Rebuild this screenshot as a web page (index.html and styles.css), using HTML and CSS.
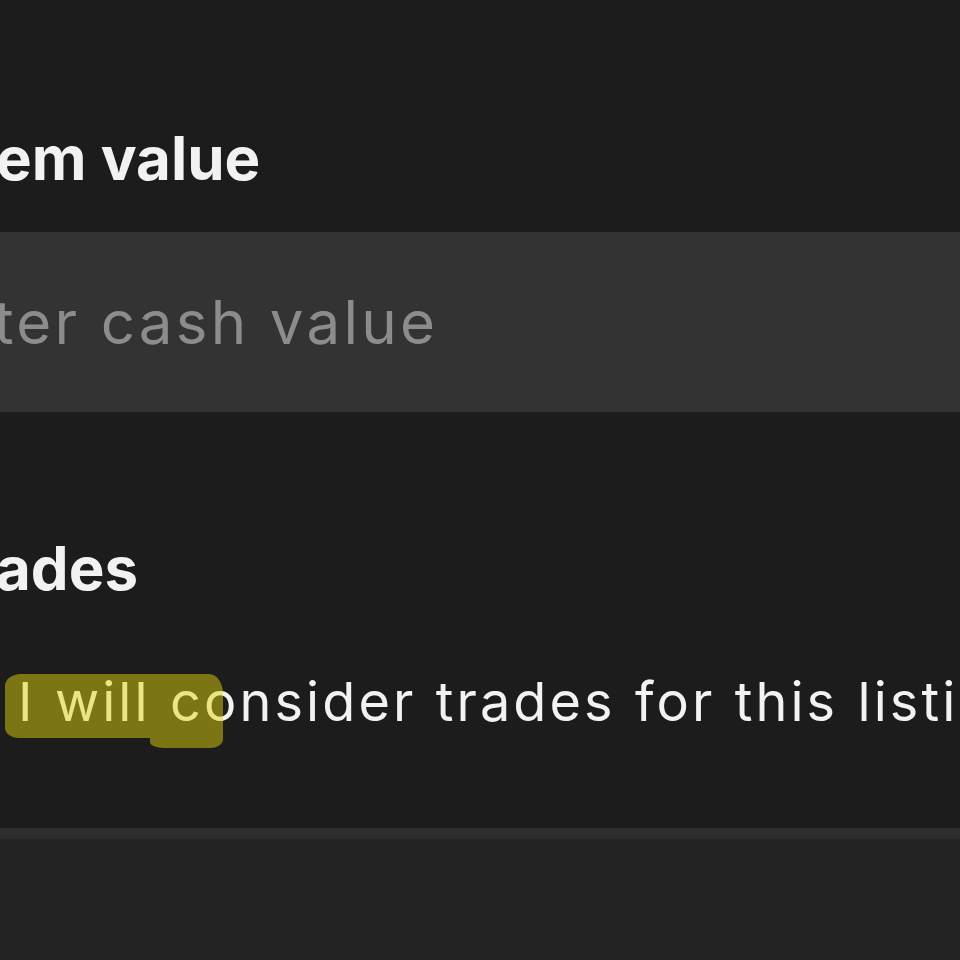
FILE: index.html
```html
<!DOCTYPE html>
<html>
<head>
	<link rel="stylesheet" href="styles.css">
</head>
<body>
	<div class="formular">
		<div class="sectiune">
			<h2 class="eticheta">em value</h2>
			<div class="campValoare">ter cash value</div>
		</div>

		<div class="sectiune sectiuneSchimburi">
			<h2 class="eticheta">ades</h2>
			<div class="optiune">I will consider trades for this listing</div>
		</div>
	</div>

	<div class="subsol"></div>
</body>
</html>
```

FILE: styles.css
```css
		html, body {
			margin: 0;
			height: 100%;
		}

		body {
			background-color: #1c1c1c;
			color: #f2f2f2;
			font-family: "Inter", "Lato", sans-serif;
			overflow: hidden;
			display: flex;
			flex-direction: column;
		}

		.formular {
			flex: 1;
			padding-top: 118px;
			overflow: hidden;
		}

		.eticheta {
			margin: 0 0 0 -4px;
			font-size: 60px;
			font-weight: 700;
			letter-spacing: 0;
			line-height: 80px;
			white-space: nowrap;
		}

		.campValoare {
			margin-top: 34px;
			height: 180px;
			background-color: #333333;
			color: #8c8c8c;
			font-size: 60px;
			letter-spacing: 3.3px;
			line-height: 180px;
			text-indent: -6px;
			white-space: nowrap;
		}

		.sectiuneSchimburi {
			padding-top: 116px;
		}

		.optiune {
			position: relative;
			margin-top: 54px;
			padding-left: 18px;
			font-size: 54px;
			letter-spacing: 3.1px;
			word-spacing: 1px;
			line-height: 80px;
			white-space: nowrap;
		}

		/* marcaj de evidentiere peste "I will co" */
		.optiune::before,
		.optiune::after {
			content: "";
			position: absolute;
			background-color: rgba(227, 217, 10, 0.48);
		}

		.optiune::before {
			left: 5px;
			top: 12px;
			width: 218px;
			height: 64px;
			border-radius: 16px 14px 0 14px / 12px 20px 0 10px;
		}

		.optiune::after {
			left: 150px;
			top: 76px;
			width: 73px;
			height: 10px;
			border-radius: 0 0 12px 14px / 0 0 9px 6px;
		}

		.subsol {
			height: 121px;
			background-color: #232323;
			border-top: 11px solid #2d2d2d;
		}
```
